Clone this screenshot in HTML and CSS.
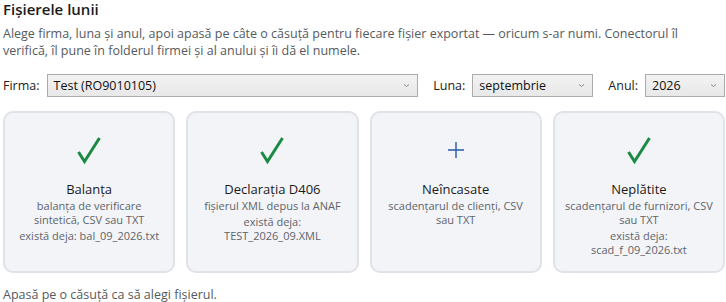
FILE: index.html
```html
<!DOCTYPE html>
<html lang="ro">
<head>
<meta charset="utf-8">
<link rel="stylesheet" href="styles.css">
</head>
<body>
<div class="page">
  <h1 class="title">Fișierele lunii</h1>
  <p class="intro">Alege firma, luna și anul, apoi apasă pe câte o căsuță pentru fiecare fișier exportat — oricum s-ar numi. Conectorul îl verifică, îl pune în folderul firmei și al anului și îi dă el numele.</p>
  <div class="filters">
    <label class="lbl">Firma:</label>
    <div class="sel sel-firma"><span class="val">Test (RO9010105)</span><svg class="chev" width="7" height="5" viewBox="0 0 7 5"><path d="M1 1.5 L3.5 3.5 L6 1.5" fill="none" stroke="#888" stroke-width="1"/></svg></div>
    <label class="lbl lbl-gap">Luna:</label>
    <div class="sel sel-luna"><span class="val">septembrie</span><svg class="chev" width="7" height="5" viewBox="0 0 7 5"><path d="M1 1.5 L3.5 3.5 L6 1.5" fill="none" stroke="#888" stroke-width="1"/></svg></div>
    <label class="lbl lbl-gap">Anul:</label>
    <div class="sel sel-an"><span class="val">2026</span><svg class="chev" width="7" height="5" viewBox="0 0 7 5"><path d="M1 1.5 L3.5 3.5 L6 1.5" fill="none" stroke="#888" stroke-width="1"/></svg></div>
  </div>
  <div class="cards">
    <div class="card">
      <div class="icon"><svg width="24" height="28" viewBox="0 0 24 28"><path d="M1.5 16 L7.5 25.5 L22.5 2" fill="none" stroke="#1c8a45" stroke-width="3" stroke-linejoin="miter" stroke-linecap="butt"/></svg></div>
      <div class="ctitle">Balanța</div>
      <div class="csub">balanța de verificare sintetică, CSV sau TXT</div>
      <div class="cexist">există deja: bal_09_2026.txt</div>
    </div>
    <div class="card">
      <div class="icon"><svg width="24" height="28" viewBox="0 0 24 28"><path d="M1.5 16 L7.5 25.5 L22.5 2" fill="none" stroke="#1c8a45" stroke-width="3" stroke-linejoin="miter" stroke-linecap="butt"/></svg></div>
      <div class="ctitle">Declarația D406</div>
      <div class="csub">fișierul XML depus la ANAF</div>
      <div class="cexist">există deja:<br>TEST_2026_09.XML</div>
    </div>
    <div class="card">
      <div class="icon"><svg width="16" height="16" viewBox="0 0 16 16"><path d="M8 0 V16 M0 8 H16" stroke="#2a57a8" stroke-width="1.4"/></svg></div>
      <div class="ctitle">Neîncasate</div>
      <div class="csub">scadențarul de clienți, CSV sau TXT</div>
    </div>
    <div class="card">
      <div class="icon"><svg width="24" height="28" viewBox="0 0 24 28"><path d="M1.5 16 L7.5 25.5 L22.5 2" fill="none" stroke="#1c8a45" stroke-width="3" stroke-linejoin="miter" stroke-linecap="butt"/></svg></div>
      <div class="ctitle">Neplătite</div>
      <div class="csub">scadențarul de furnizori, CSV sau TXT</div>
      <div class="cexist">există deja:<br>scad_f_09_2026.txt</div>
    </div>
  </div>
  <p class="hint">Apasă pe o căsuță ca să alegi fișierul.</p>
</div>
</body>
</html>
```
FILE: styles.css
```css
html, body {
  margin: 0;
  padding: 0;
  background: #ffffff;
}
body {
  font-family: "Open Sans", "Noto Sans", "DejaVu Sans", sans-serif;
  color: #1e1e1e;
}
.page {
  padding: 0 1px 0 3px;
}
.title {
  margin: 0;
  font-size: 15px;
  font-weight: 600;
  line-height: 19px;
  color: #1b1b1b;
}
.intro {
  margin: 6px 0 0;
  font-size: 12.5px;
  line-height: 17px;
  color: #555a60;
}
.filters {
  display: flex;
  align-items: center;
  margin-top: 15px;
  height: 23px;
}
.lbl {
  font-size: 12.5px;
  color: #222;
  margin-right: 7px;
}
.lbl-gap {
  margin-left: 15px;
}
.sel {
  position: relative;
  box-sizing: border-box;
  height: 23px;
  border: 1px solid #acacac;
  background: linear-gradient(#f2f2f2, #e8e8e8);
  display: flex;
  align-items: center;
  padding-left: 6px;
  font-size: 12.5px;
  color: #111;
}
.sel-firma { flex: 1; }
.sel-luna { width: 121px; }
.sel-an { width: 80px; }
.chev {
  position: absolute;
  right: 7px;
  top: 8px;
}
.cards {
  display: grid;
  grid-template-columns: repeat(4, 1fr);
  gap: 11px;
  margin-top: 14px;
}
.card {
  box-sizing: border-box;
  height: 162px;
  background: #f3f4f8;
  border: 2px solid #dfe2e8;
  border-radius: 10px;
  display: flex;
  flex-direction: column;
  align-items: center;
  text-align: center;
  padding: 23px 8px 0;
}
.icon {
  height: 28px;
  display: flex;
  align-items: center;
  justify-content: center;
}
.ctitle {
  margin-top: 17px;
  font-size: 13px;
  line-height: 17px;
  color: #1b1b1b;
}
.csub {
  font-size: 11px;
  line-height: 14px;
  color: #60646a;
  margin-top: 1px;
}
.cexist {
  margin-top: 2px;
  font-size: 11px;
  line-height: 14px;
  color: #60646a;
}
.hint {
  margin: 13px 0 0;
  font-size: 12.5px;
  line-height: 17px;
  color: #555a60;
}
```
